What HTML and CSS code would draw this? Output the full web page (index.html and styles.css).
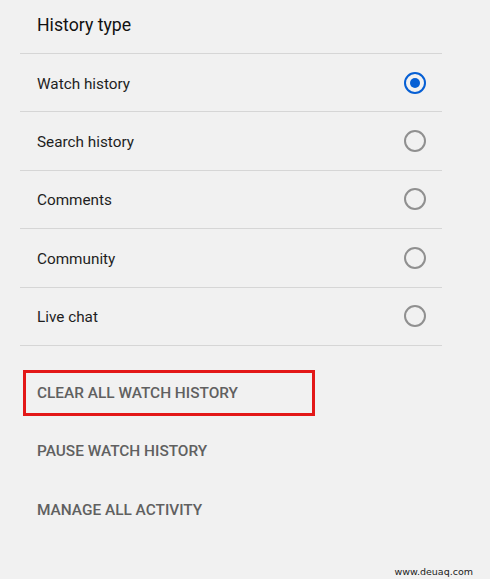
FILE: index.html
```html
<!DOCTYPE html>
<html lang="en">
<head>
    <meta charset="UTF-8">
    <meta name="viewport" content="width=device-width, initial-scale=1.0">
    <title>History type</title>
    <link rel="stylesheet" href="styles.css">
</head>
<body>

    <div class="panel">
        <h2 class="panel-title">History type</h2>

        <div class="options">
            <label class="option">
                <span class="option-label">Watch history</span>
                <span class="radio checked"></span>
            </label>
            <label class="option">
                <span class="option-label">Search history</span>
                <span class="radio"></span>
            </label>
            <label class="option">
                <span class="option-label">Comments</span>
                <span class="radio"></span>
            </label>
            <label class="option">
                <span class="option-label">Community</span>
                <span class="radio"></span>
            </label>
            <label class="option">
                <span class="option-label">Live chat</span>
                <span class="radio"></span>
            </label>
        </div>

        <div class="actions">
            <a class="action highlighted" href="#">Clear all watch history</a>
            <a class="action" href="#">Pause watch history</a>
            <a class="action" href="#">Manage all activity</a>
        </div>
    </div>

    <div class="watermark">www.deuaq.com</div>

</body>
</html>
```

FILE: styles.css
```css
body {
    margin: 0;
    padding: 0;
    background: #f1f1f1;
    font-family: Roboto, 'Noto Sans', Arial, sans-serif;
    height: 579px;
    overflow: hidden;
}

.panel {
    margin-left: 20px;
    width: 422px;
}

.panel-title {
    margin: 0;
    height: 54px;
    padding-left: 17px;
    box-sizing: border-box;
    padding-top: 13px;
    line-height: 24px;
    font-size: 17.7px;
    font-weight: 400;
    color: #111;
    border-bottom: 1px solid #d6d6d6;
}

.option {
    display: flex;
    align-items: center;
    justify-content: space-between;
    height: 58.4px;
    box-sizing: border-box;
    padding: 0 16px 0 17px;
    border-bottom: 1px solid #d6d6d6;
    font-size: 15.3px;
    color: #1e1e1e;
    cursor: pointer;
}

.option-label {
    padding-top: 2px;
}

.radio {
    width: 22px;
    height: 22px;
    box-sizing: border-box;
    border: 2px solid #909090;
    border-radius: 50%;
    display: flex;
    align-items: center;
    justify-content: center;
}

.radio.checked {
    border-color: #065fd4;
}

.radio.checked::after {
    content: "";
    width: 10px;
    height: 10px;
    border-radius: 50%;
    background: #065fd4;
}

.actions {
    display: flex;
    flex-direction: column;
    gap: 12.5px;
    padding-top: 24px;
}

.action {
    display: flex;
    align-items: center;
    width: 292px;
    height: 46px;
    margin-left: 3px;
    box-sizing: border-box;
    border: 3px solid transparent;
    padding-left: 11px;
    font-size: 15.4px;
    font-weight: 500;
    text-transform: uppercase;
    color: #606060;
    text-decoration: none;
}

.action.highlighted {
    border-color: #e31818;
}

.watermark {
    position: absolute;
    right: 17px;
    bottom: 2px;
    font-family: 'DejaVu Sans', Verdana, sans-serif;
    font-size: 9.5px;
    color: #222;
}
```
